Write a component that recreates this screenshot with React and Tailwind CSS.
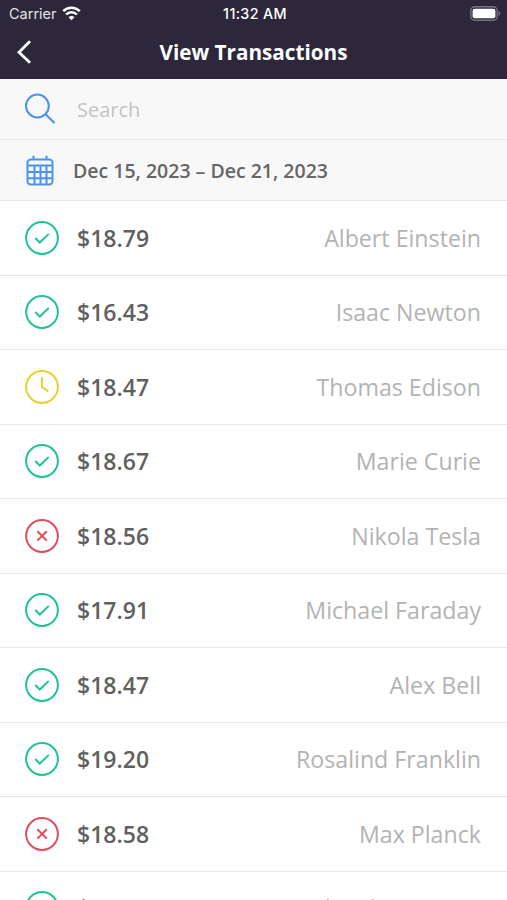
const transactions = [
  { amount: "$18.79", name: "Albert Einstein", status: "approved" },
  { amount: "$16.43", name: "Isaac Newton", status: "approved" },
  { amount: "$18.47", name: "Thomas Edison", status: "pending" },
  { amount: "$18.67", name: "Marie Curie", status: "approved" },
  { amount: "$18.56", name: "Nikola Tesla", status: "declined" },
  { amount: "$17.91", name: "Michael Faraday", status: "approved" },
  { amount: "$18.47", name: "Alex Bell", status: "approved" },
  { amount: "$19.20", name: "Rosalind Franklin", status: "approved" },
  { amount: "$18.58", name: "Max Planck", status: "declined" },
  { amount: "$18.32", name: "Richard Feynman", status: "approved" },
];

const statusIcons = {
  approved: { color: "text-[#1fc29b]", path: "M10.3 17l4.5 4.5 9-8.6" },
  pending: { color: "text-[#ecd02f]", path: "M17 7.2v10l6.4 4.2" },
  declined: { color: "text-[#e34c5a]", path: "M12.4 12.2l9.4 9.4M21.8 12.2l-9.4 9.4" },
};

function StatusIcon({ status }) {
  const icon = statusIcons[status];
  return (
    <svg className={`size-[34px] shrink-0 ${icon.color}`} viewBox="0 0 34 34" fill="none" stroke="currentColor" strokeWidth="2">
      <circle cx="17" cy="17" r="15.9" />
      <path d={icon.path} />
    </svg>
  );
}

function WifiIcon() {
  return (
    <svg className="h-[15px] w-[19px]" viewBox="0 0 19 15" fill="none" stroke="white" strokeWidth="2.5">
      <path d="M1.2 5.1a11.7 11.7 0 0 1 16.6 0" />
      <path d="M4.1 8.5a7.5 7.5 0 0 1 10.8 0" />
      <path d="M6.5 11.2a4.1 4.1 0 0 1 6 0L9.5 14.2z" fill="white" stroke="none" />
    </svg>
  );
}

function BatteryIcon() {
  return (
    <svg className="h-[15px] w-[31px]" viewBox="0 0 31 15">
      <rect x="0.8" y="0.8" width="26.4" height="13.4" rx="4" fill="none" stroke="#77747f" strokeWidth="1.4" />
      <rect x="2.6" y="2.7" width="22.8" height="9.6" rx="2" fill="white" />
      <path d="M28.7 5c2 .9 2 4.1 0 5z" fill="#77747f" />
    </svg>
  );
}

function SearchIcon() {
  return (
    <svg className="size-8" viewBox="0 0 32 32" fill="none" stroke="#4a92ee" strokeWidth="2">
      <circle cx="13.4" cy="13" r="11.4" />
      <path d="M21.5 21.2l9 8.8" />
    </svg>
  );
}

function CalendarIcon() {
  return (
    <svg className="h-[31px] w-7" viewBox="0 0 28 31" fill="none" stroke="#4a92ee" strokeWidth="2">
      <rect x="1.5" y="4.5" width="25" height="25" rx="3.2" />
      <path d="M7.5 0.8v3.6M20.5 0.8v3.6" />
      <path d="M1.5 10.5h25M1.5 17h25M1.5 23.2h25" />
      <path d="M8.5 10.5v19M14.5 10.5v19M20.5 10.5v19" />
    </svg>
  );
}

export default function App() {
  return (
    <div className="h-[900px] w-[507px] overflow-hidden bg-white font-['Open_Sans',sans-serif]">
      <header className="h-[79px] bg-[#2c273b] text-white">
        <div className="grid h-[27px] grid-cols-3 items-center pl-[9px] pr-[6px] font-['Inter',sans-serif]">
          <div className="flex items-center gap-[5px] text-[#e4e3e8]">
            <span className="pt-px text-[14.5px]">Carrier</span>
            <WifiIcon />
          </div>
          <span className="text-center text-[14.3px] font-medium tracking-[0.35px]">11:32 AM</span>
          <div className="flex justify-end">
            <BatteryIcon />
          </div>
        </div>
        <div className="grid h-[50px] grid-cols-[60px_1fr_60px] items-center">
          <button type="button" aria-label="Back" className="pl-4">
            <svg className="h-6 w-4" viewBox="0 0 16 24" fill="none" stroke="white" strokeWidth="2.8">
              <path d="M14 1.2L3 12.2l11 10.6" />
            </svg>
          </button>
          <h1 className="text-center text-[20.7px] font-bold leading-none">View Transactions</h1>
        </div>
      </header>

      <div className="flex h-[61px] items-center border-b border-[#e8e8e8] bg-[#f8f8f8] pl-6">
        <SearchIcon />
        <span className="ml-[21px] pt-0.5 text-[20px] text-[#c4c4c4]">Search</span>
      </div>
      <div className="flex h-[61px] items-center border-b border-[#e8e8e8] bg-[#f8f8f8] pl-[26px]">
        <CalendarIcon />
        <span className="ml-[19px] pt-0.5 text-[19.5px] font-semibold text-[#666666]">Dec 15, 2023 – Dec 21, 2023</span>
      </div>

      <ul>
        {transactions.map((t, i) => (
          <li key={i} className="flex h-[74.5px] items-center border-b border-[#e9e9e9] pl-[25px] pr-[26px]">
            <StatusIcon status={t.status} />
            <span className="ml-[18px] text-[23px] font-semibold text-[#606060]">{t.amount}</span>
            <span className="ml-auto pt-px text-[23.2px] text-[#b3b3b3]">{t.name}</span>
          </li>
        ))}
      </ul>
    </div>
  );
}
